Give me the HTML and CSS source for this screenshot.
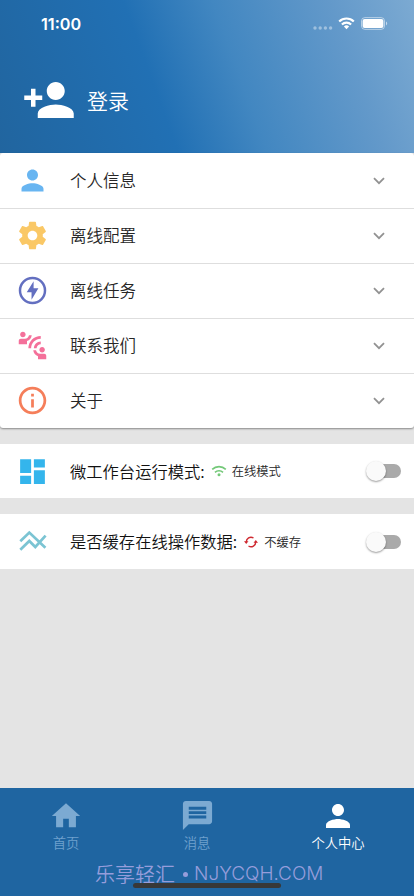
FILE: index.html
```html
<!DOCTYPE html>
<html lang="zh-CN">
<head>
<meta charset="utf-8">
<meta name="viewport" content="width=device-width, initial-scale=1">
<title>个人中心</title>
<link rel="stylesheet" href="styles.css">
</head>
<body>
<div class="app">
  <header class="header">
    <div class="status">
      <span class="time">11:00</span>
      <svg class="signal" width="20" height="4" viewBox="0 0 20 4"><g fill="#fff" opacity=".4"><circle cx="2" cy="2" r="1.7"/><circle cx="7.2" cy="2" r="1.7"/><circle cx="12.4" cy="2" r="1.7"/><circle cx="17.6" cy="2" r="1.7"/></g></svg>
      <svg class="wifi" width="17" height="13" viewBox="0 0 17 13"><g fill="none" stroke="#fff" stroke-width="2.2"><path d="M1.2 4.5a10.4 10.4 0 0 1 14.6 0"/><path d="M3.9 7.5a6.6 6.6 0 0 1 9.2 0"/></g><path fill="#fff" d="M5.9 9.4a3.8 3.8 0 0 1 5.2 0L8.5 12.2z"/></svg>
      <svg class="battery" width="27" height="13" viewBox="0 0 27 13"><rect x=".5" y=".6" width="23" height="11.8" rx="3.4" fill="none" stroke="#fff" opacity=".5"/><rect x="1.6" y="2" width="20.8" height="9" rx="2" fill="#fff"/><path d="M25 4.6c1.6.7 1.6 3.2 0 3.9z" fill="#fff" opacity=".6"/></svg>
    </div>
    <div class="login">
      <svg width="54" height="54" viewBox="0 0 24 24" fill="#fff"><path d="M15 12c2.21 0 4-1.79 4-4s-1.79-4-4-4-4 1.79-4 4 1.79 4 4 4zm-9-2V7H4v3H1v2h3v3h2v-3h3v-2H6zm9 4c-2.67 0-8 1.34-8 4v2h16v-2c0-2.66-5.33-4-8-4z"/></svg>
      <span>登录</span>
    </div>
  </header>

  <main class="content">
    <section class="menu">
      <div class="row">
        <svg class="icon" viewBox="0 0 24 24" fill="#68b5f1"><path d="M12 12c2.21 0 4-1.79 4-4s-1.79-4-4-4-4 1.79-4 4 1.79 4 4 4zm0 2c-2.67 0-8 1.34-8 4v2h16v-2c0-2.66-5.33-4-8-4z"/></svg>
        <span class="label">个人信息</span>
        <svg class="chevron" viewBox="0 0 12 8"><path d="M1 1.2l5 5 5-5"/></svg>
      </div>
      <div class="row">
        <svg class="icon" viewBox="0 0 24 24" fill="#fac866"><path d="M19.43 12.98c.04-.32.07-.64.07-.98s-.03-.66-.07-.98l2.11-1.65c.19-.15.24-.42.12-.64l-2-3.46c-.12-.22-.39-.3-.61-.22l-2.49 1c-.52-.4-1.08-.73-1.69-.98l-.38-2.65C14.46 2.18 14.25 2 14 2h-4c-.25 0-.46.18-.49.42l-.38 2.65c-.61.25-1.17.59-1.69.98l-2.49-1c-.23-.09-.49 0-.61.22l-2 3.46c-.13.22-.07.49.12.64l2.11 1.65c-.04.32-.07.65-.07.98s.03.66.07.98l-2.11 1.65c-.19.15-.24.42-.12.64l2 3.46c.12.22.39.3.61.22l2.49-1c.52.4 1.08.73 1.69.98l.38 2.65c.03.24.24.42.49.42h4c.25 0 .46-.18.49-.42l.38-2.65c.61-.25 1.17-.59 1.69-.98l2.49 1c.23.09.49 0 .61-.22l2-3.46c.12-.22.07-.49-.12-.64l-2.11-1.65zM12 15.5c-1.93 0-3.5-1.57-3.5-3.5s1.57-3.5 3.5-3.5 3.5 1.57 3.5 3.5-1.57 3.5-3.5 3.5z"/></svg>
        <span class="label">离线配置</span>
        <svg class="chevron" viewBox="0 0 12 8"><path d="M1 1.2l5 5 5-5"/></svg>
      </div>
      <div class="row">
        <svg class="icon" viewBox="0 0 24 24" fill="#636fc0"><circle cx="12" cy="12" r="9.1" fill="none" stroke="#636fc0" stroke-width="1.8"/><path d="M12.8 5.2v5.2h3.5l-5 8.4v-5.6H7.8z"/></svg>
        <span class="label">离线任务</span>
        <svg class="chevron" viewBox="0 0 12 8"><path d="M1 1.2l5 5 5-5"/></svg>
      </div>
      <div class="row">
        <svg class="icon" viewBox="0 0 24 24" fill="#f4709a"><path d="M11 14H9c0-4.97 4.03-9 9-9v2c-3.87 0-7 3.13-7 7zm7-3V9c-2.76 0-5 2.24-5 5h2c0-1.66 1.34-3 3-3zM7 4c0-1.11-.89-2-2-2s-2 .89-2 2 .89 2 2 2 2-.89 2-2zm4.45.5h-2C9.21 5.92 7.99 7 6.5 7h-3C2.67 7 2 7.67 2 8.5V11h6V8.74c1.86-.59 3.25-2.23 3.45-4.24zM19 17c1.11 0 2-.89 2-2s-.89-2-2-2-2 .89-2 2 .89 2 2 2zm1.5 1h-3c-1.49 0-2.71-1.08-2.95-2.5h-2c.2 2.01 1.59 3.65 3.45 4.24V22h6v-2.5c0-.83-.67-1.5-1.5-1.5z"/></svg>
        <span class="label">联系我们</span>
        <svg class="chevron" viewBox="0 0 12 8"><path d="M1 1.2l5 5 5-5"/></svg>
      </div>
      <div class="row">
        <svg class="icon" viewBox="0 0 24 24" fill="#f57e5a"><path d="M11 17h2v-6h-2v6zm1-15C6.48 2 2 6.48 2 12s4.48 10 10 10 10-4.48 10-10S17.52 2 12 2zm0 18c-4.41 0-8-3.59-8-8s3.59-8 8-8 8 3.59 8 8-3.59 8-8 8zM11 9h2V7h-2v2z"/></svg>
        <span class="label">关于</span>
        <svg class="chevron" viewBox="0 0 12 8"><path d="M1 1.2l5 5 5-5"/></svg>
      </div>
    </section>

    <section class="setting">
      <svg class="icon" viewBox="0 0 24 24" fill="#34b5ec"><path d="M3 13h8V3H3v10zm0 8h8v-6H3v6zm10 0h8V11h-8v10zm0-18v6h8V3h-8z"/></svg>
      <span class="label strong">微工作台运行模式:</span>
      <svg class="state-icon" width="16" height="12" viewBox="0 0 16 12"><g fill="none" stroke="#73c878" stroke-width="1.6"><path d="M1.2 4.4a9.8 9.8 0 0 1 13.6 0"/><path d="M4 7.4a5.8 5.8 0 0 1 8 0"/></g><circle cx="8" cy="9.8" r="1.5" fill="#73c878"/></svg>
      <span class="state">在线模式</span>
      <span class="switch"><i></i></span>
    </section>

    <section class="setting">
      <svg class="icon" viewBox="0 0 33 33" fill="none" stroke="#7bc4d3" stroke-width="2.7"><path d="M4.3 16.2l9-8.6L29.4 22.8M4.3 24.8l9-8.8 6 6L29.6 10.7"/></svg>
      <span class="label strong">是否缓存在线操作数据:</span>
      <svg class="state-icon" width="14" height="12" viewBox="0 0 14 12"><g fill="none" stroke="#cf2930" stroke-width="1.4"><path d="M2.3 6.3A4.7 4.7 0 0 1 9.5 2M11.7 5.7A4.7 4.7 0 0 1 4.5 10"/></g><path fill="#cf2930" d="M0 5.2h4.5L2.2 8zM9.5 6.8H14L11.8 4z"/></svg>
      <span class="state">不缓存</span>
      <span class="switch"><i></i></span>
    </section>
  </main>

  <nav class="tabs">
    <div class="tab">
      <svg width="34" height="34" viewBox="0 0 24 24"><path d="M10 20v-6h4v6h5v-8h3L12 3 2 12h3v8z"/></svg>
      <span>首页</span>
    </div>
    <div class="tab message">
      <svg width="35" height="35" viewBox="0 0 24 24"><path d="M20 2H4c-1.1 0-1.99.9-1.99 2L2 22l4-4h14c1.1 0 2-.9 2-2V4c0-1.1-.9-2-2-2z"/><path class="cut" d="M6 6h12v2H6zM6 9h12v2H6zM6 12h12v2H6z"/></svg>
      <span>消息</span>
    </div>
    <div class="tab active">
      <svg width="36" height="36" viewBox="0 0 24 24"><path d="M12 12c2.21 0 4-1.79 4-4s-1.79-4-4-4-4 1.79-4 4 1.79 4 4 4zm0 2c-2.67 0-8 1.34-8 4v2h16v-2c0-2.66-5.33-4-8-4z"/></svg>
      <span>个人中心</span>
    </div>
    <div class="watermark"><span>乐享轻汇</span><b></b><span class="domain">NJYCQH.COM</span></div>
    <div class="home-bar"></div>
  </nav>
</div>
</body>
</html>
```
FILE: styles.css
```css
* { box-sizing: border-box; }
body {
  margin: 0;
  font-family: "Noto Sans CJK SC", sans-serif;
  font-weight: 350;
  color: #262626;
}
svg { display: block; flex: none; }
.app {
  display: flex;
  flex-direction: column;
  width: 414px;
  height: 896px;
  overflow: hidden;
  background: #e4e4e4;
}
.header {
  flex: none;
  height: 153px;
  background: linear-gradient(70deg, #21659f 0%, #2170b4 38%, #4287c1 57%, #6399ca 82%, #7caad2 100%);
  color: #fff;
}
.status {
  display: flex;
  align-items: center;
  height: 47px;
  padding: 0 26px 0 41px;
}
.time {
  flex: 1;
  font: 600 16.2px/20px Inter, sans-serif;
}
.signal { margin: 8px 5px 0 0; }
.wifi { margin-right: 6px; }
.login {
  display: flex;
  align-items: center;
  gap: 11px;
  height: 106px;
  padding-left: 22px;
  font-size: 21px;
}
.login span { margin-top: -1px; }
.content { flex: 1; }
.menu {
  height: 275px;
  background: #fff;
  border-radius: 3px;
  box-shadow: 0 1px 2px rgba(0, 0, 0, .4);
}
.row, .setting {
  display: flex;
  align-items: center;
  height: 55px;
  padding-left: 16px;
}
.row { padding-bottom: 1px; }
.row + .row { padding-bottom: 2px; border-top: 1px solid #dedede; }
.icon { width: 33px; height: 33px; margin-right: 21px; }
.label {
  font-size: 16.5px;
  line-height: 24px;
  white-space: nowrap;
}
.strong { font-size: 16.3px; color: #111; }
.chevron {
  width: 12px;
  height: 8px;
  margin: 1px 29px 0 auto;
  fill: none;
  stroke: #929292;
  stroke-width: 1.8;
}
.setting {
  height: 54px;
  margin-top: 16px;
  padding-right: 13px;
  background: #fff;
}
.setting + .setting { height: 55px; }
.setting + .setting .label { margin-top: -1px; }
.state-icon { margin: 0 5px 0 6px; }
.setting + .setting .state-icon { margin: 0 6px 0 7px; }
.state { font-size: 12.3px; }
.switch {
  display: flex;
  align-items: center;
  width: 32px;
  height: 14px;
  margin-left: auto;
  border-radius: 7px;
  background: #aaa;
}
.switch i {
  flex: none;
  width: 20px;
  height: 20px;
  margin-left: -3px;
  border-radius: 50%;
  background: #fafafa;
  box-shadow: 0 1px 2px rgba(0, 0, 0, .4);
}
.tabs {
  position: relative;
  flex: none;
  display: grid;
  grid-template-columns: 132px 130px 152px;
  height: 108px;
  background: #1f65a1;
}
.tab {
  display: flex;
  flex-direction: column;
  align-items: center;
  padding-top: 11px;
  fill: #7caad2;
  color: #6fa1ce;
  font-size: 13.3px;
  line-height: 20px;
}
.message svg { margin: -1px 0 0; }
.active { fill: #fff; color: #fff; }
.active svg { margin: -1px 0 -1px; }
.cut { fill: #1f65a1; }
.watermark {
  position: absolute;
  left: 95px;
  bottom: 8px;
  display: flex;
  align-items: center;
  color: #969ddb;
  font-size: 20px;
  line-height: 28px;
  white-space: nowrap;
}
.watermark b {
  width: 5px;
  height: 5px;
  margin: 0 6px 0 8px;
  border-radius: 50%;
  background: #969ddb;
}
.domain { font-family: Inter, sans-serif; font-size: 19px; font-weight: 300; }
.home-bar {
  position: absolute;
  left: 133px;
  bottom: 8px;
  width: 148px;
  height: 5px;
  border-radius: 3px;
  background: #383838;
}
```
